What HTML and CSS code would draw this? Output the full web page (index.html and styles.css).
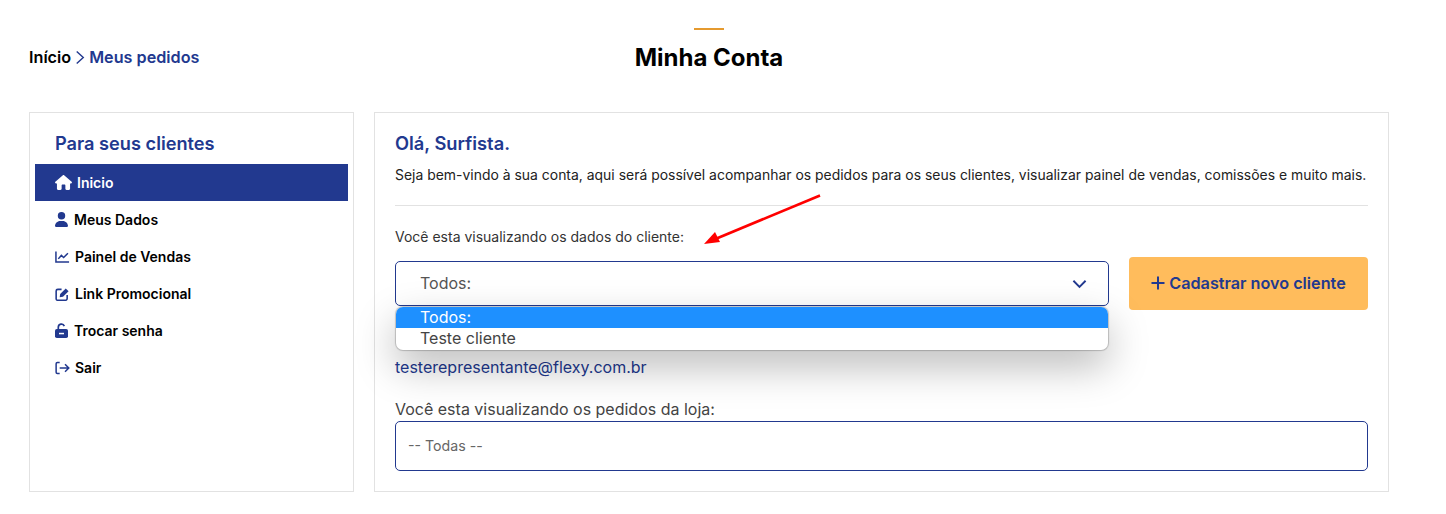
FILE: index.html
```html
<!DOCTYPE html>
<html lang="pt-BR">
<head>
<meta charset="utf-8">
<title>Minha Conta</title>
<link rel="stylesheet" href="styles.css">
</head>
<body>
<div class="page">
  <header class="top">
    <nav class="crumbs"><span class="crumb-home">Início</span><svg class="crumb-sep" viewBox="0 0 10 16" width="10" height="15"><path d="M1.500 1.500l7 6.500-7 6.500" fill="none" stroke="#22398f" stroke-width="1.500"/></svg><span class="crumb-here">Meus pedidos</span></nav>
    <div class="title-wrap"><span class="title-bar"></span><h1 class="title">Minha Conta</h1></div>
  </header>
  <div class="columns">
    <aside class="side">
      <h2 class="side-title">Para seus clientes</h2>
      <ul class="menu">
        <li class="menu-item active"><svg class="ico ico-home" viewBox="0 0 576 512"><path d="M575.800 255.500c0 18-15 32.100-32 32.100h-32l.7 160.200c0 2.700-.2 5.400-.5 8.100V472c0 22.100-17.900 40-40 40H456c-1.100 0-2.200 0-3.300-.1-1.400.1-2.800.1-4.200.1H392c-22.100 0-40-17.900-40-40V360c0-17.700-14.300-32-32-32h-64c-17.700 0-32 14.300-32 32v112c0 22.100-17.900 40-40 40h-55.900c-1.500 0-3-.1-4.500-.2-1.200.1-2.400.2-3.600.2H104c-22.100 0-40-17.900-40-40V360c0-.9 0-1.900.1-2.800v-69.700H32c-18 0-32-14-32-32.100 0-9 3-17 10-24L266.400 8c7-7 15-8 22-8s15 2 21 7l255.400 224.500c8 7 12 15 11 24z"/></svg>Inicio</li>
        <li class="menu-item"><svg class="ico ico-user" viewBox="0 0 448 512"><path d="M224 256a128 128 0 1 0 0-256 128 128 0 1 0 0 256zm-45.700 48C79.800 304 0 383.800 0 482.300 0 498.700 13.300 512 29.700 512h388.600c16.400 0 29.700-13.300 29.700-29.700C448 383.800 368.200 304 269.700 304h-91.400z"/></svg>Meus Dados</li>
        <li class="menu-item"><svg class="ico ico-wide" viewBox="0 0 16 14"><path d="M1 1v11.300h14M3.500 9l3.300-3.700 2.400 2.200L13.800 3" fill="none" stroke="currentColor" stroke-width="1.600"/></svg>Painel de Vendas</li>
        <li class="menu-item"><svg class="ico ico-wide" viewBox="0 0 16 15"><path d="M7 2.500H3A1.800 1.800 0 0 0 1.200 4.300v8.500A1.500 1.500 0 0 0 2.700 14.200h8.500a1.800 1.800 0 0 0 1.800-1.800V8.500" fill="none" stroke="currentColor" stroke-width="1.700"/><path d="M5.500 7.500l6-6 3 3-6 6-3.500.5z"/></svg>Link Promocional</li>
        <li class="menu-item"><svg class="ico ico-lock" viewBox="0 0 13 15"><path d="M3.300 6.500V4.200a3.100 3.100 0 0 1 6-1.100" fill="none" stroke="currentColor" stroke-width="1.700"/><rect y="6" width="13" height="9" rx="1.800"/><rect x="4" y="9.800" width="5" height="1.500" fill="#fff"/></svg>Trocar senha</li>
        <li class="menu-item"><svg class="ico ico-wide" viewBox="0 0 16 14"><path d="M5 1.200H2.500A1.300 1.300 0 0 0 1.200 2.500v9a1.300 1.300 0 0 0 1.300 1.300H5M5 7h9.500M10.700 3l4 4-4 4" fill="none" stroke="currentColor" stroke-width="1.600"/></svg>Sair</li>
      </ul>
    </aside>
    <main class="panel">
      <h2 class="hello">Olá, Surfista.</h2>
      <p class="intro">Seja bem-vindo à sua conta, aqui será possível acompanhar os pedidos para os seus clientes, visualizar painel de vendas, comissões e muito mais.</p>
      <hr class="rule">
      <p class="client-label">Você esta visualizando os dados do cliente:</p>
      <div class="select-row">
        <div class="select-wrap">
          <div class="select"><span class="select-text">Todos:</span><svg class="chev" viewBox="0 0 16 10" width="15" height="10"><path d="M1.500 1.500L8 8l6.500-6.500" fill="none" stroke="#22398f" stroke-width="2"/></svg></div>
          <ul class="dropdown">
            <li class="option selected">Todos:</li>
            <li class="option">Teste cliente</li>
          </ul>
        </div>
        <button class="cta" type="button"><svg class="plus" viewBox="0 0 14 14" width="14" height="14"><path d="M7 .5v13M.5 7h13" stroke="#22398f" stroke-width="2"/></svg>Cadastrar novo cliente</button>
      </div>
      <p class="email">testerepresentante@flexy.com.br</p>
      <label class="store-label">Você esta visualizando os pedidos da loja:</label>
      <div class="store-select">-- Todas --</div>
      <svg class="arrow" viewBox="0 0 120 52" width="120" height="52"><path d="M117 1.500L10 46" stroke="#f00" stroke-width="2.700" fill="none"/><path d="M1 50l11-12 5 10z" fill="#f00"/></svg>
    </main>
  </div>
</div>
</body>
</html>
```
FILE: styles.css
```css
* { box-sizing: border-box; }
html, body { margin: 0; padding: 0; background: #fff; }
body { font-family: Inter, "Liberation Sans", sans-serif; color: #000; height: 514px; overflow: hidden; }
ul { list-style: none; margin: 0; padding: 0; }
h1, h2, p { margin: 0; }

.page { width: 1360px; margin-left: 29px; padding-top: 28px; }

.top { position: relative; height: 84px; }
.crumbs { position: absolute; left: 0; top: 19px; display: flex; align-items: center; font-size: 16.200px; font-weight: 600; line-height: 20px; }
.crumb-home { color: #000; }
.crumb-sep { margin: 1px 4px 0 4px; }
.crumb-here { color: #22398f; }
.title-wrap { display: flex; flex-direction: column; align-items: center; }
.title-bar { width: 30px; height: 2px; background: #e59a2f; }
.title { font-size: 24px; font-weight: 700; line-height: 30px; margin-top: 13px; }

.columns { display: flex; gap: 20px; height: 380px; }
.side { width: 325px; flex: none; border: 1px solid #e2e2e2; padding: 0 5px; }
.side-title { font-size: 18.200px; font-weight: 600; color: #22398f; line-height: 24px; padding: 18px 0 9px 20px; }
.menu-item { display: flex; align-items: center; height: 37px; padding-left: 20px; font-size: 14px; font-weight: 600; color: #000; }
.menu-item.active { background: #22398f; color: #fff; }
.ico { fill: currentColor; color: #22398f; flex: none; }
.active .ico { color: #fff; }
.ico-home { width: 17px; height: 15px; margin-right: 5px; }
.ico-user { width: 13px; height: 15px; margin-right: 6px; }
.ico-wide { width: 15px; height: 14px; margin-right: 5px; fill: currentColor; }
.ico-lock { width: 13px; height: 15px; margin-right: 6px; }

.panel { position: relative; flex: 1; min-width: 0; border: 1px solid #e2e2e2; padding: 18px 20px 0; }
.hello { font-size: 18.300px; font-weight: 600; color: #22398f; line-height: 24px; }
.intro { font-size: 13.950px; line-height: 20px; color: #222; margin-top: 10px; white-space: nowrap; }
.rule { border: 0; border-top: 1px solid #e2e2e2; margin: 20px 0 0; }
.client-label { font-size: 14px; line-height: 20px; color: #333; margin-top: 21px; }
.select-row { display: flex; align-items: center; gap: 20px; margin-top: 10px; }
.select-wrap { position: relative; flex: 1; }
.select { height: 45px; border: 1px solid #22398f; border-radius: 5px; display: flex; align-items: center; justify-content: space-between; padding: 0 21px 0 24px; font-size: 16px; color: #555; background: #fff; }
.select-text { margin-top: -1px; }
.dropdown { position: absolute; left: 1px; right: 1px; top: 46px; height: 43px; background: #fff; border-radius: 7px; overflow: hidden; box-shadow: 0 0 1px 1px rgba(0,0,0,.2), 0 16px 40px rgba(0,0,0,.28); font-size: 16px; z-index: 2; }
.option { height: 21px; line-height: 21px; padding-left: 24px; color: #444; }
.option.selected { background: #1e90ff; color: #fff; }
.cta { width: 239px; height: 53px; flex: none; border: 0; border-radius: 4px; background: #ffbc5c; color: #22398f; font-family: inherit; font-size: 16.200px; font-weight: 600; display: flex; align-items: center; justify-content: center; gap: 4px; padding: 0 0 1px; }
.email { font-size: 16px; line-height: 22px; color: #22398f; margin-top: 46px; }
.store-label { display: block; font-size: 16px; line-height: 20px; color: #444; margin-top: 21px; }
.store-select { height: 50px; border: 1px solid #22398f; border-radius: 5px; display: flex; align-items: center; padding: 0 0 2px 12px; font-size: 14.200px; color: #666; margin-top: 2px; }
.arrow { position: absolute; left: 328px; top: 81px; }
```
